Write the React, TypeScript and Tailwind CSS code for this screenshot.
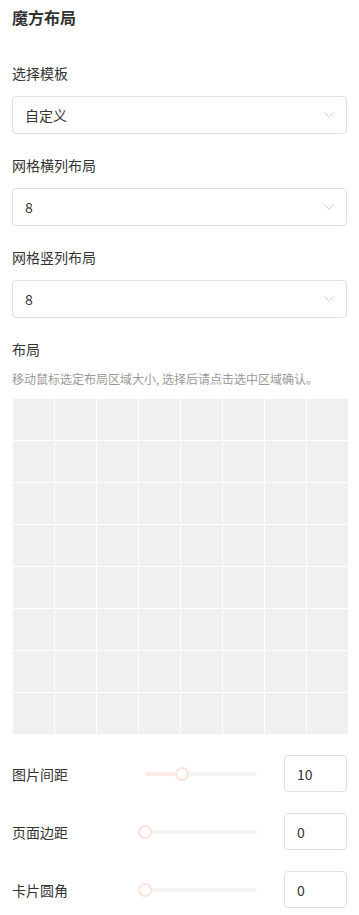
import { useState } from "react";

const font = { fontFamily: '"Noto Sans CJK SC", "Noto Sans", sans-serif' };

function Chevron() {
  return (
    <svg width="10" height="6" viewBox="0 0 10 6" fill="none" className="text-[#c8cbd2]">
      <polyline points="0.5,0.5 5,5.3 9.5,0.5" stroke="currentColor" strokeWidth="1" />
    </svg>
  );
}

function SelectField({ label, value, first }: { label: string; value: string; first?: boolean }) {
  return (
    <div className={first ? "mt-[35px]" : "mt-[21px]"}>
      <div className="h-5 text-sm leading-5 text-[#333]">{label}</div>
      <div className="mt-[13px] flex h-[38px] items-center justify-between rounded border border-[#dcdfe6] pl-[12px] pr-[12px]">
        <span className="text-sm text-[#333]">{value}</span>
        <Chevron />
      </div>
    </div>
  );
}

function SliderRow({ label, value, max }: { label: string; value: number; max: number }) {
  const pct = (value / max) * 100;
  return (
    <div className="flex h-[37px] items-center">
      <div className="w-[133px] text-sm text-[#333]">{label}</div>
      <div className="relative h-1 w-[112px] rounded-full bg-[#f5f5f5]">
        <div className="h-1 rounded-full bg-[#fdebe5]" style={{ width: `${pct}%` }} />
        <div
          className="absolute top-1/2 h-[14px] w-[14px] -translate-x-1/2 -translate-y-1/2 rounded-full border-2 border-[#fde3da] bg-white"
          style={{ left: `${pct}%` }}
        />
      </div>
      <div className="ml-auto flex h-[37px] w-[63px] items-center rounded border border-[#dcdfe6] pl-[12px] text-sm text-[#333]">
        {value}
      </div>
    </div>
  );
}

export default function App() {
  const [cells] = useState(() => Array.from({ length: 64 }, (_, i) => i));

  return (
    <div className="flow-root min-h-[915px] bg-white px-3" style={font}>
      <div className="pt-[6px] text-base font-bold leading-[22px] text-[#333]">魔方布局</div>

      <SelectField label="选择模板" value="自定义" first />
      <SelectField label="网格横列布局" value="8" />
      <SelectField label="网格竖列布局" value="8" />

      <div className="mt-[21px]">
        <div className="h-5 text-sm leading-5 text-[#333]">布局</div>
        <div className="mt-[11px] text-xs leading-[18px] text-[#999]">
          移动鼠标选定布局区域大小, 选择后请点击选中区域确认。
        </div>
        <div className="ml-px mt-[11px] grid w-[335px] grid-cols-8 gap-px">
          {cells.map((i) => (
            <div key={i} className="h-[41px] bg-[#f0f0f0]" />
          ))}
        </div>
      </div>

      <div className="mt-[21px] flex flex-col gap-[21px]">
        <SliderRow label="图片间距" value={10} max={30} />
        <SliderRow label="页面边距" value={0} max={30} />
        <SliderRow label="卡片圆角" value={0} max={30} />
      </div>
    </div>
  );
}
